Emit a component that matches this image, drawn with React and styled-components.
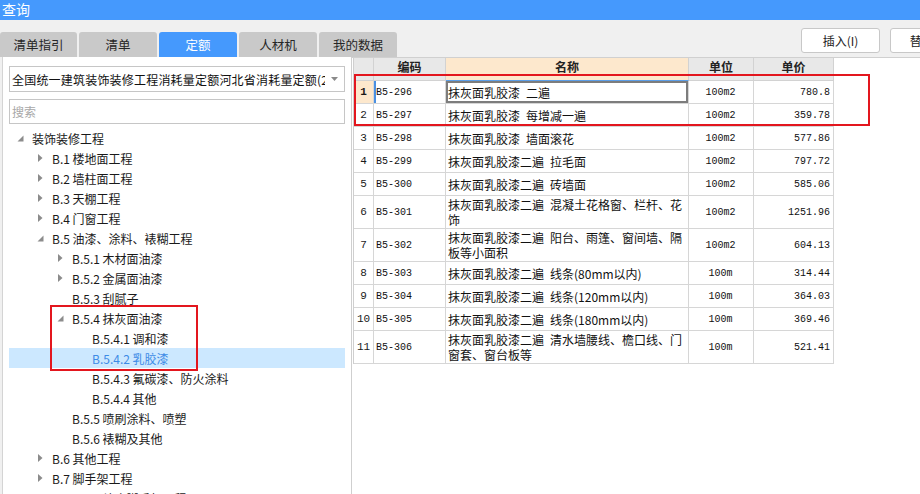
import styled, { createGlobalStyle } from "styled-components"

const GlobalStyle = createGlobalStyle`
*{box-sizing:border-box;}
html,body{margin:0;padding:0;}
body{
  width:920px;height:494px;overflow:hidden;
  background:#f0f0f0;
  font-family:"Noto Sans CJK SC","Microsoft YaHei",sans-serif;
  font-size:12px;color:#1a1a1a;
}
`
const Window = styled.div`
width:920px;
height:494px;
display:flex;
flex-direction:column;
overflow:hidden;
position:relative;
`
const TitleBar = styled.div`
height:20px;
flex:none;
background:#4599fd;
color:#fff;
font-size:14px;
line-height:18px;
padding-left:2px;
`
const Toolbar = styled.div`
height:37px;
flex:none;
display:flex;
align-items:flex-start;
justify-content:space-between;
`
const Tabs = styled.div`
display:flex;
gap:2px;
margin-top:12px;
`
const Tab = styled.div`
width:${p => p.w || 78}px;
height:25px;
border-radius:3px 3px 0 0;
background:${p => p.active ? '#4599fd' : '#c9c9c9'};
color:${p => p.active ? '#fff' : '#262626'};
font-size:12.5px;
display:flex;
align-items:center;
justify-content:center;
`
const Buttons = styled.div`
display:flex;
gap:10px;
margin-top:8px;
margin-right:-49px;
`
const Button = styled.div`
width:79px;
height:25px;
border:1px solid #c8c8c8;
border-radius:3px;
background:#fff;
color:#222;
display:flex;
align-items:center;
justify-content:center;
`
const Main = styled.div`
flex:1;
min-height:0;
display:flex;
`
const LeftPanel = styled.div`
width:350px;
flex:none;
margin-left:2px;
border-left:1px solid #d4d4d4;
border-right:1px solid #cfcfcf;
background:#fff;
padding:9px 6px 0;
`
const Select = styled.div`
height:26px;
border:1px solid #c6c6c6;
display:flex;
align-items:center;
padding:0 6px 0 2px;
gap:6px;
span{flex:1;white-space:nowrap;overflow:hidden;letter-spacing:0.2px;color:#111;}
`
const Search = styled.div`
height:25px;
margin-top:7px;
border:1px solid #c6c6c6;
display:flex;
align-items:center;
padding-left:2px;
color:#a8a8a8;
`
const Tree = styled.div`
margin-top:4px;
`
const TreeRow = styled.div`
height:20px;
display:flex;
align-items:center;
padding-left:${p => 3 + p.level * 20}px;
background:${p => p.selected ? '#cce8ff' : 'transparent'};
color:${p => p.selected ? '#3d8be6' : '#1a1a1a'};
white-space:nowrap;
`
const Arrow = styled.span`
width:16px;
height:20px;
flex:none;
display:flex;
align-items:center;
justify-content:center;
`
const Label = styled.span`
margin-left:4px;
`
const RightPanel = styled.div`
flex:1;
background:#fff;
border-top:1px solid #d0d0d0;
padding-left:1px;
`
const Grid = styled.div`
width:481px;
display:grid;
grid-template-columns:20px 72px 243px 65px 80px;
grid-auto-rows:auto;
border-left:1px solid #cfcfcf;
`
const Head = styled.div`
height:23px;
background:${p => p.hl ? '#fde8cd' : '#e8e8e8'};
border-right:1px solid #d2d2d2;
border-bottom:1px solid ${p => p.hl ? '#5b9ee8' : '#d2d2d2'};
font-weight:bold;
color:#222;
display:flex;
align-items:center;
justify-content:center;
padding-bottom:5px;
`
const Cell = styled.div`
height:${p => p.tall ? 33 : 23}px;
border-right:1px solid #d6d6d6;
border-bottom:1px solid #d6d6d6;
display:flex;
align-items:center;
justify-content:${p => p.align === 'right' ? 'flex-end' : p.align === 'center' ? 'center' : 'flex-start'};
padding:0 3px 0 2px;
`
const NumCell = styled(Cell)`
justify-content:center;
padding:0;
font-family:"Liberation Mono","DejaVu Sans Mono",monospace;
font-size:11px;
background:${p => p.current ? '#fde8cd' : '#fff'};
font-weight:${p => p.current ? 'bold' : 'normal'};
`
const CodeCell = styled(Cell)`
font-family:"Liberation Mono","DejaVu Sans Mono",monospace;
font-size:10px;
color:#111;
box-shadow:${p => p.current ? 'inset 2px 0 0 #4a90e2' : 'none'};
`
const NameCell = styled(Cell)`
line-height:15px;
color:#111;
box-shadow:${p => p.current ? 'inset 0 0 0 2px #7d7d7d' : 'none'};
`
const MonoCell = styled(Cell)`
font-family:"Liberation Mono","DejaVu Sans Mono",monospace;
font-size:10px;
color:#111;
`
const Mark = styled.div`
position:absolute;
left:${p => p.x}px;
top:${p => p.y}px;
width:${p => p.w}px;
height:${p => p.h}px;
border:2px solid #e3161e;
pointer-events:none;
`

const S = '\u2002'

const tree = [
  { level: 0, arrow: 'open', text: '装饰装修工程' },
  { level: 1, arrow: 'closed', text: 'B.1 楼地面工程' },
  { level: 1, arrow: 'closed', text: 'B.2 墙柱面工程' },
  { level: 1, arrow: 'closed', text: 'B.3 天棚工程' },
  { level: 1, arrow: 'closed', text: 'B.4 门窗工程' },
  { level: 1, arrow: 'open', text: 'B.5 油漆、涂料、裱糊工程' },
  { level: 2, arrow: 'closed', text: 'B.5.1 木材面油漆' },
  { level: 2, arrow: 'closed', text: 'B.5.2 金属面油漆' },
  { level: 2, text: 'B.5.3 刮腻子' },
  { level: 2, arrow: 'open', text: 'B.5.4 抹灰面油漆' },
  { level: 3, text: 'B.5.4.1 调和漆' },
  { level: 3, text: 'B.5.4.2 乳胶漆', selected: true },
  { level: 3, text: 'B.5.4.3 氟碳漆、防火涂料' },
  { level: 3, text: 'B.5.4.4 其他' },
  { level: 2, text: 'B.5.5 喷刷涂料、喷塑' },
  { level: 2, text: 'B.5.6 裱糊及其他' },
  { level: 1, arrow: 'closed', text: 'B.6 其他工程' },
  { level: 1, arrow: 'closed', text: 'B.7 脚手架工程' },
  { level: 2, text: 'B.7.1 综合脚手架工程' },
]

const rows = [
  { code: 'B5-296', name: [`抹灰面乳胶漆${S}二遍`], unit: '100m2', price: '780.8' },
  { code: 'B5-297', name: [`抹灰面乳胶漆${S}每增减一遍`], unit: '100m2', price: '359.78' },
  { code: 'B5-298', name: [`抹灰面乳胶漆${S}墙面滚花`], unit: '100m2', price: '577.86' },
  { code: 'B5-299', name: [`抹灰面乳胶漆二遍${S}拉毛面`], unit: '100m2', price: '797.72' },
  { code: 'B5-300', name: [`抹灰面乳胶漆二遍${S}砖墙面`], unit: '100m2', price: '585.06' },
  { code: 'B5-301', name: [`抹灰面乳胶漆二遍${S}混凝土花格窗、栏杆、花`, '饰'], unit: '100m2', price: '1251.96' },
  { code: 'B5-302', name: [`抹灰面乳胶漆二遍${S}阳台、雨篷、窗间墙、隔`, '板等小面积'], unit: '100m2', price: '604.13' },
  { code: 'B5-303', name: [`抹灰面乳胶漆二遍${S}线条(80mm以内)`], unit: '100m', price: '314.44' },
  { code: 'B5-304', name: [`抹灰面乳胶漆二遍${S}线条(120mm以内)`], unit: '100m', price: '364.03' },
  { code: 'B5-305', name: [`抹灰面乳胶漆二遍${S}线条(180mm以内)`], unit: '100m', price: '369.46' },
  { code: 'B5-306', name: [`抹灰面乳胶漆二遍${S}清水墙腰线、檐口线、门`, '窗套、窗台板等'], unit: '100m', price: '521.41' },
]

const TreeArrow = ({ type }) => {
  if (type === 'closed') return (
    <svg width="5" height="8" viewBox="0 0 5 8"><polygon points="0,0 4.5,4 0,8" fill="#8c8c8c" /></svg>
  )
  if (type === 'open') return (
    <svg width="7" height="7" viewBox="0 0 7 7"><polygon points="6.5,0.5 6.5,6.5 0.5,6.5" fill="#8c8c8c" /></svg>
  )
  return null
}

const App = () => {
  return (
    <Window>
      <GlobalStyle />
      <TitleBar>查询</TitleBar>
      <Toolbar>
        <Tabs>
          <Tab w={77}>清单指引</Tab>
          <Tab>清单</Tab>
          <Tab active>定额</Tab>
          <Tab>人材机</Tab>
          <Tab>我的数据</Tab>
        </Tabs>
        <Buttons>
          <Button>插入(I)</Button>
          <Button>替换(R)</Button>
        </Buttons>
      </Toolbar>
      <Main>
        <LeftPanel>
          <Select>
            <span>全国统一建筑装饰装修工程消耗量定额河北省消耗量定额(2016)</span>
            <svg width="7" height="4" viewBox="0 0 7 4"><polygon points="0,0 7,0 3.5,4" fill="#8a8a8a" /></svg>
          </Select>
          <Search>搜索</Search>
          <Tree>
            {tree.map((t, i) =>
              <TreeRow key={i} level={t.level} selected={t.selected}>
                <Arrow><TreeArrow type={t.arrow} /></Arrow>
                <Label>{t.text}</Label>
              </TreeRow>
            )}
          </Tree>
        </LeftPanel>
        <RightPanel>
          <Grid>
            <Head />
            <Head>编码</Head>
            <Head hl>名称</Head>
            <Head>单位</Head>
            <Head>单价</Head>
            {rows.map((r, i) => {
              const tall = r.name.length > 1
              const cur = i === 0
              return [
                <NumCell key={`n${i}`} tall={tall} current={cur}>{i + 1}</NumCell>,
                <CodeCell key={`c${i}`} tall={tall} current={cur}>{r.code}</CodeCell>,
                <NameCell key={`m${i}`} tall={tall} current={cur}>
                  <div>{r.name.map((l, j) => <div key={j}>{l}</div>)}</div>
                </NameCell>,
                <MonoCell key={`u${i}`} tall={tall} align="center">{r.unit}</MonoCell>,
                <MonoCell key={`p${i}`} tall={tall} align="right">{r.price}</MonoCell>,
              ]
            })}
          </Grid>
        </RightPanel>
      </Main>
      <Mark x={354} y={74} w={516} h={52} />
      <Mark x={50} y={305} w={148} h={66} />
    </Window>
  )
}
export default App
